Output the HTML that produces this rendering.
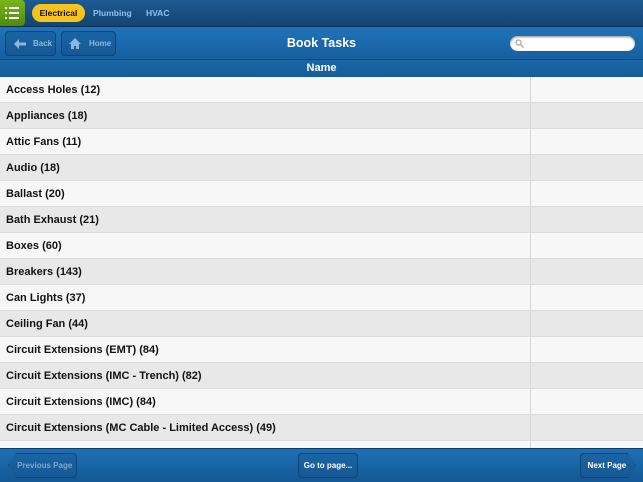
<!DOCTYPE html>
<html><head><style>
*{margin:0;padding:0;box-sizing:border-box}
body{width:643px;height:482px;overflow:hidden;font-family:"Liberation Sans",Arial,sans-serif;background:#f7f7f7;position:relative}
.top{position:absolute;left:0;top:0;width:643px;height:27px;background:linear-gradient(#1d5a92,#124572);border-bottom:1px solid #0b2e50}
.menu{position:absolute;left:0;top:0;width:25px;height:26px;background:linear-gradient(#79b51f,#4f8a0c);border-radius:0 4px 4px 0}
.menu i{position:absolute;left:9px;width:10px;height:2px;background:#fff}
.menu b{position:absolute;left:5px;width:2px;height:2px;background:#fff}
.tab{position:absolute;top:4px;height:18px;font-size:8.5px;font-weight:bold;line-height:18px;color:#8fc2ef}
.elec{left:32px;width:53px;background:#f8c31a;color:#111;border-radius:9px;text-align:center}
.nav{position:absolute;left:0;top:27px;width:643px;height:33px;background:linear-gradient(#1f73b9,#175f9f);border-bottom:1px solid #0f4675}
.btn{position:absolute;height:25px;border:1px solid #0f4474;border-radius:4px;background:linear-gradient(#1a64a4,#165894);color:#8fb7dc;font-size:8px;font-weight:bold;line-height:23px}
.title{position:absolute;left:0;width:643px;top:9px;text-align:center;color:#fff;font-size:12.5px;font-weight:bold}
.search{position:absolute;left:510px;top:9px;width:125px;height:15px;background:#fff;border-radius:8px;box-shadow:inset 0 1px 2px #888}
.hdr{position:absolute;left:0;top:60px;width:643px;height:17px;background:linear-gradient(#1b66a6,#175c97);color:#fff;font-size:11px;font-weight:bold;text-align:center;line-height:17px}
.rows{position:absolute;left:0;top:77px;width:643px}
.r{height:26px;font-size:11px;font-weight:bold;color:#111;line-height:26px;padding-left:6px;border-bottom:1px solid #ddd;position:relative}
.r:nth-child(odd){background:#f7f7f7}.r:nth-child(even){background:#e8e8e8}
.r:after{content:"";position:absolute;left:530px;top:0;width:1px;height:26px;background:#d8d8d8}
.foot{position:absolute;left:0;top:448px;width:643px;height:34px;background:linear-gradient(#1d70b6,#145895);border-top:1px solid #0d3f6a}
</style></head><body>
<div class="top">
<div class="menu"><b style="top:7px"></b><b style="top:12px"></b><b style="top:17px"></b><i style="top:7px"></i><i style="top:12px"></i><i style="top:17px"></i></div>
<div class="tab elec">Electrical</div>
<div class="tab" style="left:93px">Plumbing</div>
<div class="tab" style="left:146px">HVAC</div>
</div>
<div class="nav">
<div class="btn" style="left:5px;top:4px;width:51px"><svg style="position:absolute;left:8px;top:7px" width="12" height="10" viewBox="0 0 12 10"><path d="M5 0L0 5l5 5V6.5h7v-3H5z" fill="#8fb7dc"/></svg><span style="position:absolute;left:27px">Back</span></div>
<div class="btn" style="left:61px;top:4px;width:55px"><svg style="position:absolute;left:7px;top:6px" width="12" height="11" viewBox="0 0 12 11"><path d="M6 0L0 6h2v5h3V8h2v3h3V6h2z" fill="#8fb7dc"/></svg><span style="position:absolute;left:27px">Home</span></div>
<div class="title">Book Tasks</div>
<div class="search"><svg style="position:absolute;left:5px;top:3px" width="9" height="9"><circle cx="3.5" cy="3.5" r="2.5" stroke="#aaa" stroke-width="1.3" fill="none"/><path d="M5.5 5.5L8.5 8.5" stroke="#aaa" stroke-width="1.5"/></svg></div>
</div>
<div class="hdr">Name</div>
<div class="rows">
<div class="r">Access Holes (12)</div>
<div class="r">Appliances (18)</div>
<div class="r">Attic Fans (11)</div>
<div class="r">Audio (18)</div>
<div class="r">Ballast (20)</div>
<div class="r">Bath Exhaust (21)</div>
<div class="r">Boxes (60)</div>
<div class="r">Breakers (143)</div>
<div class="r">Can Lights (37)</div>
<div class="r">Ceiling Fan (44)</div>
<div class="r">Circuit Extensions (EMT) (84)</div>
<div class="r">Circuit Extensions (IMC - Trench) (82)</div>
<div class="r">Circuit Extensions (IMC) (84)</div>
<div class="r">Circuit Extensions (MC Cable - Limited Access) (49)</div>
<div class="r"></div>
</div>
<div class="foot">
<div class="btn" style="left:8px;top:4px;width:69px;text-align:center;color:#7ea7cc;clip-path:polygon(8px 0,100% 0,100% 100%,8px 100%,0 50%)">&nbsp;&nbsp;Previous Page</div>
<div class="btn" style="left:298px;top:4px;width:60px;text-align:center;color:#fff">Go to page...</div>
<div class="btn" style="left:580px;top:4px;width:56px;text-align:center;color:#fff;clip-path:polygon(0 0,calc(100% - 8px) 0,100% 50%,calc(100% - 8px) 100%,0 100%)">Next Page&nbsp;</div>
</div>
</body></html>
